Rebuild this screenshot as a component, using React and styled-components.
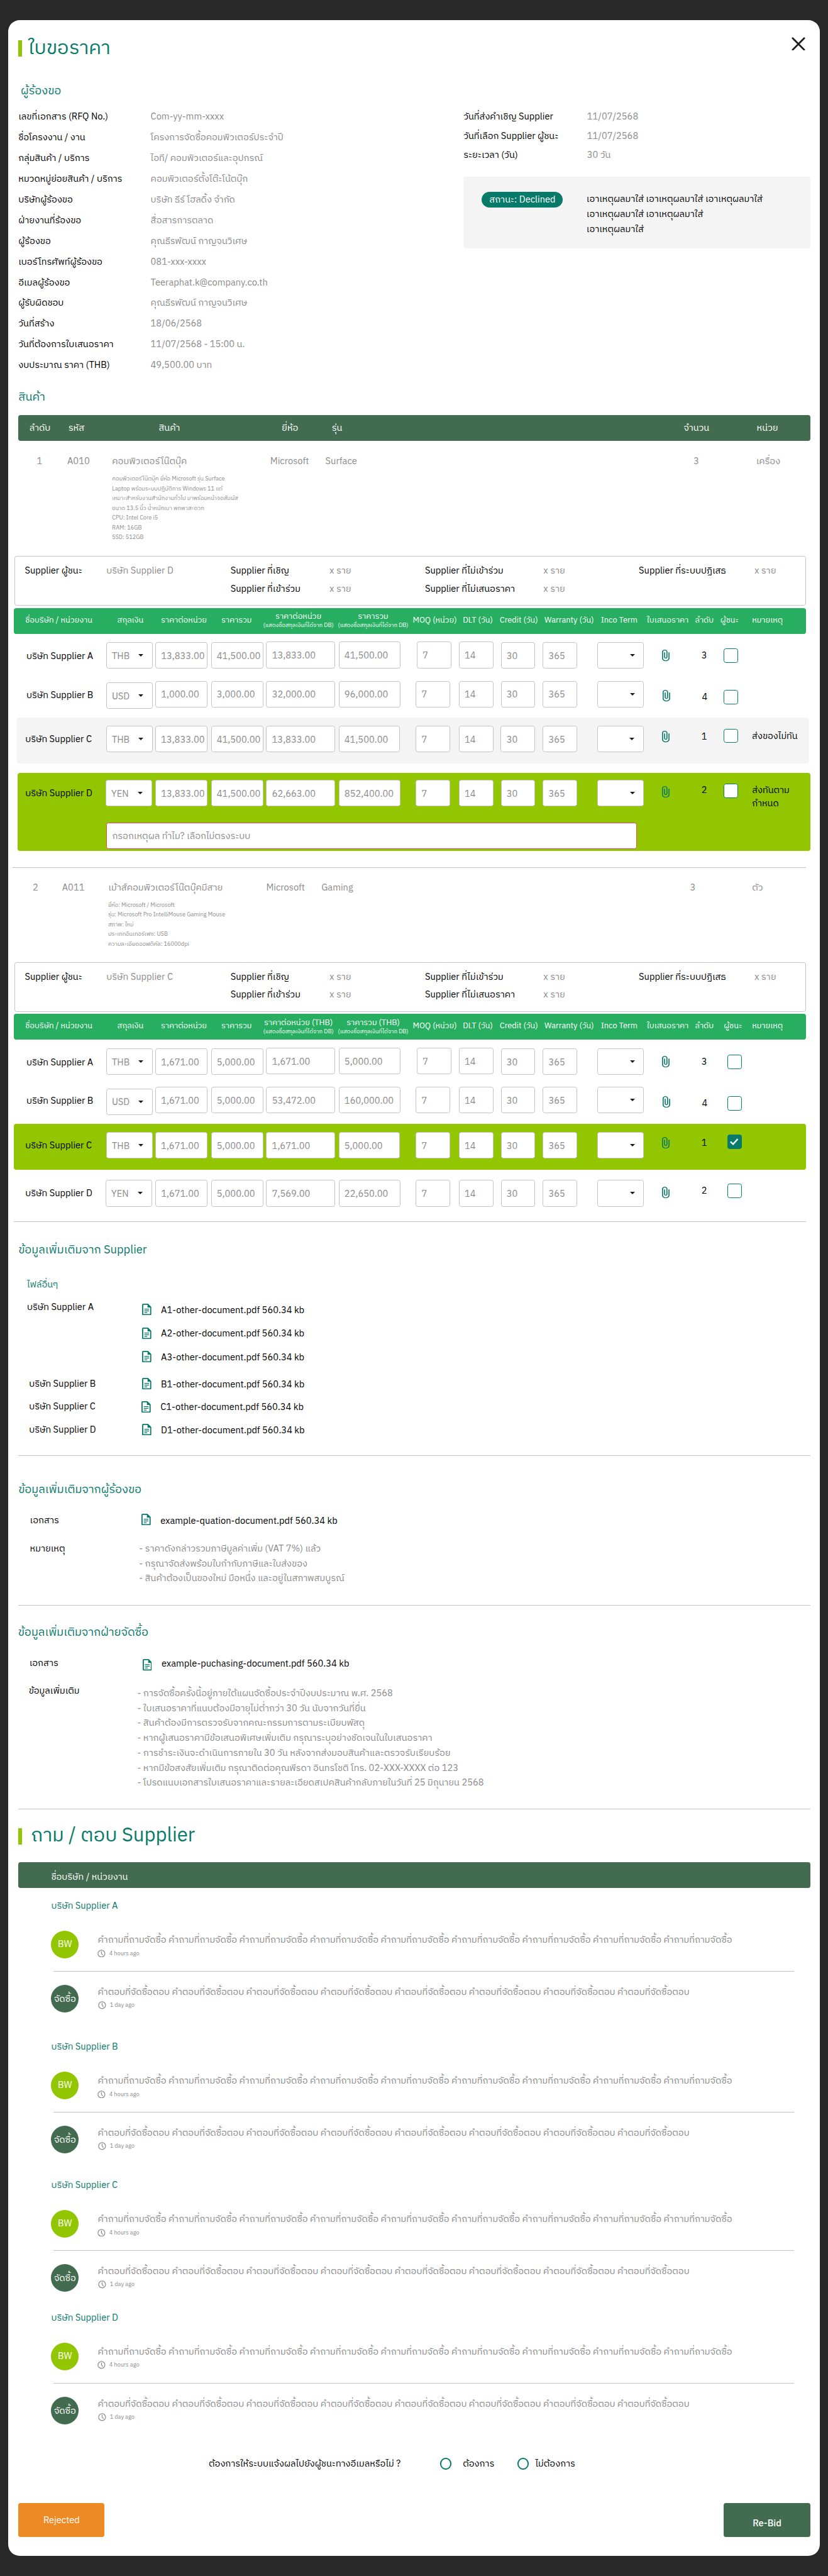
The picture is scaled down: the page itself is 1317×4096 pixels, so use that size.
import React from 'react';
import styled, { createGlobalStyle } from 'styled-components';

const teal = '#077A6A';
const lime = '#91C600';
const forest = '#436B4F';
const green = '#27AE60';
const grey = '#8A8A8A';
const line = '#C4C4C4';

const Global = createGlobalStyle`
  body { margin: 0; background: #282828; }
  * { box-sizing: border-box; }
`;

/* Turns a list of left edges into column widths. */
const grid = xs => xs.slice(1).map((x, i) => `${x - xs[i]}px`).join(' ') + ' max-content';

const Page = styled.div`
  zoom: 0.914583;
  width: 1440px;
  height: 4478px;
  overflow: hidden;
  padding: 35px 14px;
  background: #282828;
  color: #000;
  font-family: "IBM Plex Sans Thai", "Noto Sans", sans-serif;
  font-size: 16px;
`;
const Modal = styled.main`
  height: 4409px;
  border-radius: 20px;
  background: #fff;
  display: flex;
  flex-direction: column;
`;
const TitleRow = styled.header`
  display: flex;
  align-items: center;
  height: 56px;
  flex: none;
  margin-top: ${p => p.$mt}px;
  padding: 0 25px 0 18px;
`;
const Accent = styled.span`
  width: 6px;
  height: 28px;
  background: ${lime};
`;
const Title = styled.h1`
  margin: 0;
  padding: ${p => p.$pt}px 0 0 ${p => p.$gap}px;
  flex: 1;
  font-size: 34px;
  line-height: 48px;
  font-weight: 400;
  color: ${teal};
`;
const CloseIcon = styled.svg`
  width: 24px;
  height: 24px;
  margin-bottom: 16px;
`;
const Heading = styled.h2`
  margin: ${p => p.$mt}px 0 0 ${p => p.$x}px;
  flex: none;
  font-size: 20px;
  line-height: 34px;
  height: 30px;
  font-weight: 400;
  color: ${teal};
  white-space: nowrap;
`;
const SubHeading = styled.h3`
  margin: 33.5px 0 0 33px;
  height: 24px;
  font-size: 16px;
  line-height: 27px;
  font-weight: 400;
  color: ${teal};
`;
const Info = styled.section`
  display: grid;
  grid-template-columns: 774px 603px;
  height: 468px;
  margin-top: 13px;
  padding-left: 18px;
`;
const InfoRow = styled.div`
  display: grid;
  grid-template-columns: ${p => p.$w}px max-content;
  line-height: ${p => p.$h + 3}px;
  height: ${p => p.$h}px;
  white-space: nowrap;
`;
const InfoRight = styled.div`
  padding-top: 1.5px;
`;
const Muted = styled.span`
  color: ${grey};
`;
const ReasonCard = styled.div`
  display: grid;
  grid-template-columns: 182px max-content;
  margin-top: 21.5px;
  height: 125px;
  padding: 27px 0 0 32px;
  border-radius: 4px;
  background: #f4f4f4;
`;
const Pill = styled.span`
  width: 141px;
  height: 27px;
  line-height: 30px;
  border-radius: 14px;
  background: ${teal};
  color: #fff;
  text-align: center;
`;
const ReasonText = styled.div`
  padding-top: 1px;
  line-height: 26px;
  white-space: pre;
`;
const HeaderBar = styled.div`
  display: grid;
  grid-template-columns: ${p => p.$cols};
  flex: none;
  height: 45px;
  line-height: ${p => p.$lh}px;
  margin: 17px 17px 0 18px;
  padding-left: ${p => p.$pl}px;
  border-radius: 4px;
  background: ${forest};
  color: #fff;
  white-space: nowrap;
`;
const ItemRow = styled.div`
  display: grid;
  grid-template-columns: ${p => p.$cols};
  height: 24px;
  flex: none;
  line-height: 27px;
  margin-top: ${p => p.$mt}px;
  padding-left: ${p => p.$pl}px;
  color: ${grey};
  white-space: nowrap;
`;
const Desc = styled.div`
  margin: 10.7px 0 0 ${p => p.$x}px;
  font-size: 10px;
  line-height: 17px;
  color: ${grey};
  white-space: pre;
`;
const Summary = styled.div`
  flex: none;
  height: 86px;
  margin: ${p => p.$mt}px 24px 0 11px;
  padding: 9px 0 0 17px;
  border: 1px solid ${line};
  border-radius: 4px;
`;
const SummaryRow = styled.div`
  display: grid;
  grid-template-columns: 142px 216px 172px 166px 206px 166px 201px max-content;
  height: 31px;
  line-height: 34px;
  white-space: nowrap;
`;
const QuoteHead = styled.div`
  flex: none;
  display: grid;
  grid-template-columns: ${p => p.$cols};
  height: 45px;
  margin: 4px 24px 0 10px;
  padding-left: 20px;
  border-radius: 4px;
  background: ${green};
  color: #fff;
  font-size: 14px;
  line-height: 43px;
  white-space: nowrap;
`;
const TwoLine = styled.div`
  display: flex;
  flex-direction: column;
  align-items: center;
  width: 122px;
  padding-top: 7px;
  font-size: 14px;
  line-height: 18px;
`;
const Tiny = styled.span`
  font-size: 10px;
  line-height: 14px;
`;
const QuoteRow = styled.div`
  flex: none;
  display: grid;
  grid-template-columns: ${p => p.$cols};
  align-items: start;
  height: ${p => p.$h}px;
  margin: ${p => p.$mt || 0}px ${p => p.$mr || 0}px 0 ${p => p.$ml || 0}px;
  padding-left: ${p => p.$pl}px;
  border-radius: 4px;
  background: ${p => p.$bg || 'transparent'};
`;
const Cell = styled.div`
  margin-top: ${p => p.$t + 2.2}px;
  line-height: 24px;
  white-space: pre;
`;
const Field = styled.div`
  display: flex;
  align-items: center;
  justify-content: space-between;
  width: ${p => p.$w}px;
  height: 46px;
  margin-top: ${p => p.$t}px;
  padding: 0 15px 0 9px;
  border: 1px solid ${p => p.$error ? '#E8455F' : line};
  border-radius: 4px;
  background: #fff;
  color: ${grey};
  line-height: 40px;
  white-space: nowrap;
`;
const FieldText = styled.span`
  padding-top: 4px;
`;
const Caret = styled.i`
  margin-left: auto;
  border: 5px solid transparent;
  border-top: 5px solid #1c1c1c;
  border-bottom: 0;
`;
const ClipSvg = styled.svg`
  width: 13px;
  height: 20px;
  margin-top: ${p => p.$t}px;
  fill: ${teal};
`;
const Check = styled.div`
  display: grid;
  place-items: center;
  width: 25px;
  height: 25px;
  margin-top: ${p => p.$t}px;
  border: 1px solid ${teal};
  border-radius: 4px;
  background: ${p => p.$on ? teal : '#fff'};
`;
const ReasonField = styled(Field)`
  grid-column: 2 / -1;
  margin-top: 15px;
  margin-left: 1.5px;
`;
const Rule = styled.hr`
  flex: none;
  height: 1.1px;
  border: 0;
  background: ${line};
  margin: ${p => p.$mt}px ${p => p.$r ?? 17}px 0 ${p => p.$l ?? 18}px;
`;
const Files = styled.div`
  margin-top: 11.5px;
`;
const FileGroup = styled.div`
  display: grid;
  grid-template-columns: ${p => p.$w}px max-content;
  padding-left: ${p => p.$x}px;
  margin-top: ${p => p.$mt || 0}px;
`;
const FileLabel = styled.div`
  height: ${p => p.$h}px;
  line-height: ${p => p.$h + 3}px;
  white-space: nowrap;
`;
const FileLine = styled.div`
  display: flex;
  align-items: center;
  gap: 17px;
  height: ${p => p.$h}px;
  line-height: 20px;
  white-space: nowrap;
`;
const FileName = styled.span`
  padding-top: 4px;
`;
const DocSvg = styled.svg`
  width: 16px;
  height: 20px;
  margin-top: ${p => p.$drop || 0}px;
`;
const Notes = styled.div`
  padding-top: 1.5px;
  margin-bottom: -1.5px;
  line-height: 26px;
  color: ${grey};
  white-space: pre;
`;
const Thread = styled.article`
  flex: none;
  height: 198px;
  margin-top: ${p => p.$mt}px;
  padding-left: 75px;
`;
const ThreadName = styled.div`
  height: 24px;
  line-height: 27px;
  color: ${teal};
`;
const Message = styled.div`
  display: grid;
  grid-template-columns: 81px 1fr;
  height: 48px;
  margin-top: ${p => p.$mt}px;
`;
const Avatar = styled.div`
  width: 48px;
  height: 48px;
  border-radius: 50%;
  background: ${p => p.$bg};
  color: #fff;
  line-height: ${p => p.$lh}px;
  text-align: center;
  white-space: nowrap;
`;
const Body = styled.div`
  padding-top: ${p => p.$pt}px;
  color: ${grey};
  line-height: 24px;
  white-space: nowrap;
`;
const Meta = styled.div`
  display: flex;
  align-items: center;
  gap: 6px;
  padding-left: ${p => p.$x}px;
  height: 19px;
  font-size: 10px;
  line-height: 16px;
`;
const Ago = styled.span`
  padding-top: 2px;
`;
const ThreadRule = styled(Rule)`
  margin: 22px 45px 0 4px;
`;
const Notify = styled.div`
  flex: none;
  display: grid;
  grid-template-columns: 402px 40px 95px 31px max-content;
  height: 24px;
  line-height: 27px;
  margin-top: 56.5px;
  padding-left: 349px;
  white-space: nowrap;
`;
const Radio = styled.span`
  width: 20px;
  height: 20px;
  margin-top: 2px;
  border: 2.4px solid ${teal};
  border-radius: 50%;
`;
const Actions = styled.div`
  display: flex;
  justify-content: space-between;
  margin: 57px 17px 0 18px;
`;
const Button = styled.button`
  width: 150px;
  height: 58px;
  padding: ${p => p.$pt || 0}px 0 0;
  border: 0;
  border-radius: 4px;
  background: ${p => p.$bg};
  color: #fff;
  font: ${p => p.$weight || 400} 16px "IBM Plex Sans Thai", "Noto Sans", sans-serif;
`;

const Clip = ({ t }) => (
  <ClipSvg $t={t} viewBox="7 1 11 22" preserveAspectRatio="none">
    <path d="M16.5 6v11.5c0 2.21-1.79 4-4 4s-4-1.79-4-4V5a2.5 2.5 0 0 1 5 0v10.5c0 .55-.45 1-1 1s-1-.45-1-1V6H10v9.5a2.5 2.5 0 0 0 5 0V5c0-2.21-1.79-4-4-4S7 2.79 7 5v12.5c0 3.04 2.46 5.5 5.5 5.5s5.5-2.46 5.5-5.5V6h-1.5z" />
  </ClipSvg>
);
const Doc = ({ drop }) => (
  <DocSvg $drop={drop} viewBox="0 0 16 20" fill="none" stroke={teal} strokeWidth="2">
    <path d="M10 1H2a1 1 0 0 0-1 1v16a1 1 0 0 0 1 1h12a1 1 0 0 0 1-1V6z" />
    <path d="M9.5 1v5.5H15z" fill={teal} stroke="none" />
    <path d="M4 9.5h8M4 12.5h8M4 15.5h5" strokeWidth="1.5" />
  </DocSvg>
);
const Clock = () => (
  <svg width="14" height="14" viewBox="0 0 14 14" fill="none" stroke={grey} strokeWidth="1.3" strokeLinecap="round">
    <circle cx="7" cy="7" r="6" />
    <path d="M7 3.5V7l2 2.5" />
  </svg>
);

const requester = [
  ['เลขที่เอกสาร (RFQ No.)', 'Com-yy-mm-xxxx'],
  ['ชื่อโครงงาน / งาน', 'โครงการจัดซื้อคอมพิวเตอร์ประจำปี'],
  ['กลุ่มสินค้า / บริการ', 'ไอที/ คอมพิวเตอร์และอุปกรณ์'],
  ['หมวดหมู่ย่อยสินค้า / บริการ', 'คอมพิวเตอร์ตั้งโต๊ะโน้ตบุ๊ก'],
  ['บริษัทผู้ร้องขอ', 'บริษัท ธีร์ โฮลดิ้ง จำกัด'],
  ['ฝ่ายงานที่ร้องขอ', 'สื่อสารการตลาด'],
  ['ผู้ร้องขอ', 'คุณธีรพัฒน์ กาญจนวิเศษ'],
  ['เบอร์โทรศัพท์ผู้ร้องขอ', '081-xxx-xxxx'],
  ['อีเมลผู้ร้องขอ', 'Teeraphat.k@company.co.th'],
  ['ผู้รับผิดชอบ', 'คุณธีรพัฒน์ กาญจนวิเศษ'],
  ['วันที่สร้าง', '18/06/2568'],
  ['วันที่ต้องการใบเสนอราคา', '11/07/2568 - 15:00 น.'],
  ['งบประมาณ ราคา (THB)', '49,500.00 บาท'],
];
const dates = [
  ['วันที่ส่งคำเชิญ Supplier', '11/07/2568'],
  ['วันที่เลือก Supplier ผู้ชนะ', '11/07/2568'],
  ['ระยะเวลา (วัน)', '30 วัน'],
];

function SummaryBox({ mt, winner }) {
  return (
    <Summary $mt={mt}>
      <SummaryRow>
        <span>Supplier ผู้ชนะ</span><Muted>บริษัท Supplier {winner}</Muted>
        <span>Supplier ที่เชิญ</span><Muted>x ราย</Muted>
        <span>Supplier ที่ไม่เข้าร่วม</span><Muted>x ราย</Muted>
        <span>Supplier ที่ระบบปฏิเสธ</span><Muted>x ราย</Muted>
      </SummaryRow>
      <SummaryRow>
        <span /><span />
        <span>Supplier ที่เข้าร่วม</span><Muted>x ราย</Muted>
        <span>Supplier ที่ไม่เสนอราคา</span><Muted>x ราย</Muted>
      </SummaryRow>
    </Summary>
  );
}

function QuoteHeader({ thb, winX }) {
  const cols = grid([44, 204, 280, 385, 458, 588, 718, 805, 869, 947, 1045, 1125, 1209, winX, 1308]);
  const suffix = thb ? ' (THB)' : '';
  return (
    <QuoteHead $cols={cols}>
      <span>ชื่อบริษัท / หน่วยงาน</span><span>สกุลเงิน</span><span>ราคาต่อหน่วย</span><span>ราคารวม</span>
      <TwoLine>{'ราคาต่อหน่วย' + suffix}<Tiny>(แสดงชื่อสกุลเงินที่ได้จาก DB)</Tiny></TwoLine>
      <TwoLine>{'ราคารวม' + suffix}<Tiny>(แสดงชื่อสกุลเงินที่ได้จาก DB)</Tiny></TwoLine>
      <span>MOQ (หน่วย)</span><span>DLT (วัน)</span><span>Credit (วัน)</span><span>Warranty (วัน)</span>
      <span>Inco Term</span><span>ใบเสนอราคา</span><span>ลำดับ</span><span>ผู้ชนะ</span><span>หมายเหตุ</span>
    </QuoteHead>
  );
}

/* Row geometry for each supplier: left edges and top offsets of its cells. */
const shapes = {
  A: { name: 46, sel: 184.5, moq: 725, clip: 1152, rank: 1220, t: { name: 27, sel: 15, unit: 15, conv: 14, rest: 15, clip: 28, rank: 26, check: 26, note: 26 } },
  B: { name: 46, sel: 184.5, moq: 723, clip: 1153, rank: 1221, t: { name: 24, sel: 14.5, unit: 12, conv: 12, rest: 12, clip: 28, rank: 27.5, check: 28, note: 26 } },
  C: { name: 44, sel: 184.5, moq: 723, clip: 1152, rank: 1220, t: { name: 25, sel: 14.3, unit: 14.3, conv: 14.3, rest: 14.3, clip: 23, rank: 20.5, check: 19, note: 19 } },
  D: { name: 44, sel: 183.5, moq: 723, clip: 1152, rank: 1220, t: { name: 22.5, sel: 12, unit: 12, conv: 12, rest: 12, clip: 23, rank: 17.5, check: 18.5, note: 17 } },
};

function Quote({ s, h, cur, vals, rank, winX, on, note, left = 14, right = 1426, bg, mt, reason }) {
  const g = shapes[s];
  const cols = grid([g.name, g.sel, 270, 367, 463, 589, g.moq, 798, 871, 944, 1039, g.clip, g.rank, winX, 1308]);
  return (
    <QuoteRow $cols={cols} $h={h} $bg={bg} $mt={mt} $ml={left - 14} $mr={1426 - right} $pl={g.name - left}>
      <Cell $t={g.t.name}>บริษัท Supplier {s}</Cell>
      <Field $w={81} $t={g.t.sel}><FieldText>{cur}</FieldText><Caret /></Field>
      <Field $w={91} $t={g.t.unit}><FieldText>{vals[0]}</FieldText></Field>
      <Field $w={91} $t={g.t.unit}><FieldText>{vals[1]}</FieldText></Field>
      <Field $w={120} $t={g.t.conv}><FieldText>{vals[2]}</FieldText></Field>
      <Field $w={107} $t={g.t.conv}><FieldText>{vals[3]}</FieldText></Field>
      <Field $w={60} $t={g.t.conv}><FieldText>7</FieldText></Field>
      <Field $w={60} $t={g.t.conv}><FieldText>14</FieldText></Field>
      <Field $w={60} $t={g.t.rest}><FieldText>30</FieldText></Field>
      <Field $w={60} $t={g.t.rest}><FieldText>365</FieldText></Field>
      <Field $w={81} $t={g.t.rest}><Caret /></Field>
      <Clip t={g.t.clip} />
      <Cell $t={g.t.rank}>{rank}</Cell>
      <Check $t={g.t.check} $on={on}>
        {on && <svg width="15" height="12" viewBox="0 0 15 12" fill="none" stroke="#fff" strokeWidth="2.6"><path d="M1 6l4.5 4.2L13.5 1.2" /></svg>}
      </Check>
      <Cell $t={g.t.note}>{note}</Cell>
      {reason && <ReasonField $w={923} $error><FieldText>{reason}</FieldText></ReasonField>}
    </QuoteRow>
  );
}

function Conversation({ name, mt }) {
  return (
    <Thread $mt={mt}>
      <ThreadName>บริษัท Supplier {name}</ThreadName>
      <Message $mt={32}>
        <Avatar $bg={lime} $lh={49}>BW</Avatar>
        <Body $pt={5.7}>
          {Array(9).fill('คำถามที่ถามจัดซื้อ').join(' ')}
          <Meta $x={0}><Clock /><Ago>4 hours ago</Ago></Meta>
        </Body>
      </Message>
      <ThreadRule />
      <Message $mt={23}>
        <Avatar $bg={forest} $lh={51}>จัดซื้อ</Avatar>
        <Body $pt={2.2}>
          {Array(8).fill('คำตอบที่จัดซื้อตอบ').join(' ')}
          <Meta $x={1}><Clock /><Ago>1 day ago</Ago></Meta>
        </Body>
      </Message>
    </Thread>
  );
}

export default function App() {
  return (
    <>
      <Global />
      <Page>
        <Modal>
          <TitleRow $mt={21}>
            <Accent />
            <Title $gap={11} $pt={2}>ใบขอราคา</Title>
            <CloseIcon viewBox="0 0 24 24" stroke="#1c1c1c" strokeWidth="3" strokeLinecap="round">
              <path d="M2 2l20 20M22 2L2 22" />
            </CloseIcon>
          </TitleRow>
          <Heading $mt={30} $x={22}>ผู้ร้องขอ</Heading>
          <Info>
            <div>
              {requester.map(([k, v]) => <InfoRow key={k} $w={230} $h={36}><span>{k}</span><Muted>{v}</Muted></InfoRow>)}
            </div>
            <InfoRight>
              {dates.map(([k, v]) => <InfoRow key={k} $w={215} $h={33}><span>{k}</span><Muted>{v}</Muted></InfoRow>)}
              <ReasonCard>
                <Pill>สถานะ: Declined</Pill>
                <ReasonText>{'เอาเหตุผลมาใส่ เอาเหตุผลมาใส่ เอาเหตุผลมาใส่\nเอาเหตุผลมาใส่ เอาเหตุผลมาใส่\nเอาเหตุผลมาใส่'}</ReasonText>
              </ReasonCard>
            </InfoRight>
          </Info>

          <Heading $mt={22} $x={18}>สินค้า</Heading>
          <HeaderBar $lh={48} $pl={19} $cols={grid([51, 119, 276, 490, 577, 1189, 1316])}>
            <span>ลำดับ</span><span>รหัส</span><span>สินค้า</span><span>ยี่ห้อ</span><span>รุ่น</span><span>จำนวน</span><span>หน่วย</span>
          </HeaderBar>
          <ItemRow $mt={23} $pl={50} $cols={grid([64, 117, 195, 470, 566, 1206, 1315])}>
            <span>1</span><span>A010</span><span>คอมพิวเตอร์โน๊ตบุ๊ค</span><span>Microsoft</span><span>Surface</span><span>3</span><span>เครื่อง</span>
          </ItemRow>
          <Desc $x={181}>{'คอมพิวเตอร์โน๊ตบุ๊ค ยี่ห้อ Microsoft รุ่น Surface\nLaptop พร้อมระบบปฏิบัติการ Windows 11 แท้\nเหมาะสำหรับงานสำนักงานทั่วไป มาพร้อมหน้าจอสัมผัส\nขนาด 13.5 นิ้ว น้ำหนักเบา พกพาสะดวก\nCPU: Intel Core i5\nRAM: 16GB\nSSD: 512GB'}</Desc>
          <SummaryBox mt={23.3} winner="D" />
          <QuoteHeader winX={1253} />
          <Quote s="A" h={70} winX={1259} cur="THB" vals={['13,833.00', '41,500.00', '13,833.00', '41,500.00']} rank="3" />
          <Quote s="B" h={76} winX={1259} cur="USD" vals={['1,000.00', '3,000.00', '32,000.00', '96,000.00']} rank="4" />
          <Quote s="C" h={80} winX={1259} left={29} right={1407} bg="#f4f4f4" cur="THB" vals={['13,833.00', '41,500.00', '13,833.00', '41,500.00']} rank="1" note="ส่งของไม่ทัน" />
          <Quote s="D" h={136} mt={16} winX={1259} left={31} right={1409} bg={lime} cur="YEN" vals={['13,833.00', '41,500.00', '62,663.00', '852,400.00']} rank="2" note={'ส่งทันตาม\nกำหนด'} reason="กรอกเหตุผล ทำไม? เลือกไม่ตรงระบบ" />

          <Rule $mt={28} $l={8} $r={24} />
          <ItemRow $mt={22} $pl={43} $cols={grid([57, 108, 188.5, 463, 559, 1200, 1308])}>
            <span>2</span><span>A011</span><span>เม้าส์คอมพิวเตอร์โน๊ตบุ๊คมีสาย</span><span>Microsoft</span><span>Gaming</span><span>3</span><span>ตัว</span>
          </ItemRow>
          <Desc $x={174}>{'ยี่ห้อ: Microsoft / Microsoft\nรุ่น: Microsoft Pro IntelliMouse Gaming Mouse\nสภาพ: ใหม่\nประเภทอินเทอร์เฟซ: USB\nความละเอียดออฟติคัล: 16000dpi'}</Desc>
          <SummaryBox mt={22.3} winner="C" />
          <QuoteHeader thb winX={1259} />
          <Quote s="A" h={70} winX={1265} cur="THB" vals={['1,671.00', '5,000.00', '1,671.00', '5,000.00']} rank="3" />
          <Quote s="B" h={76} winX={1265} cur="USD" vals={['1,671.00', '5,000.00', '53,472.00', '160,000.00']} rank="4" />
          <Quote s="C" h={80} winX={1265} left={24} right={1402} bg={lime} cur="THB" vals={['1,671.00', '5,000.00', '1,671.00', '5,000.00']} rank="1" on />
          <Quote s="D" h={84} mt={6} winX={1265} cur="YEN" vals={['1,671.00', '5,000.00', '7,569.00', '22,650.00']} rank="2" />
          <Rule $mt={0} $l={10} $r={24} />

          <Heading $mt={32.5} $x={18}>ข้อมูลเพิ่มเติมจาก Supplier</Heading>
          <SubHeading>ไฟล์อื่นๆ</SubHeading>
          <Files>
            <FileGroup $x={33} $w={200}>
              <FileLabel $h={31}>บริษัท Supplier A</FileLabel>
              <div>
                {['A1', 'A2', 'A3'].map(n => <FileLine key={n} $h={41}><Doc /><FileName>{n}-other-document.pdf 560.34 kb</FileName></FileLine>)}
              </div>
            </FileGroup>
            {['B', 'C', 'D'].map((n, i) => (
              <FileGroup key={n} $x={36.5} $w={n === 'C' ? 195.5 : 196.5} $mt={i ? 0 : 6.5}>
                <FileLabel $h={39}>บริษัท Supplier {n}</FileLabel>
                <FileLine $h={40}><Doc /><FileName>{n}1-other-document.pdf 560.34 kb</FileName></FileLine>
              </FileGroup>
            ))}
          </Files>
          <Rule $mt={24.5} />

          <Heading $mt={43} $x={18}>ข้อมูลเพิ่มเติมจากผู้ร้องขอ</Heading>
          <FileGroup $x={38} $w={194} $mt={26.5}>
            <FileLabel $h={24}>เอกสาร</FileLabel>
            <FileLine $h={24}><Doc drop={-2} /><FileName>example-quation-document.pdf 560.34 kb</FileName></FileLine>
          </FileGroup>
          <FileGroup $x={38} $w={190} $mt={24.5}>
            <FileLabel $h={26}>หมายเหตุ</FileLabel>
            <Notes>{'- ราคาดังกล่าวรวมภาษีมูลค่าเพิ่ม (VAT 7%) แล้ว\n- กรุณาจัดส่งพร้อมใบกำกับภาษีและใบส่งของ\n- สินค้าต้องเป็นของใหม่ มือหนึ่ง และอยู่ในสภาพสมบูรณ์'}</Notes>
          </FileGroup>
          <Rule $mt={33} />

          <Heading $mt={30.5} $x={17.5}>ข้อมูลเพิ่มเติมจากฝ่ายจัดซื้อ</Heading>
          <FileGroup $x={37} $w={197} $mt={27}>
            <FileLabel $h={24}>เอกสาร</FileLabel>
            <FileLine $h={24}><Doc drop={8} /><FileName>example-puchasing-document.pdf 560.34 kb</FileName></FileLine>
          </FileGroup>
          <FileGroup $x={36} $w={189} $mt={28}>
            <FileLabel $h={18}>ข้อมูลเพิ่มเติม</FileLabel>
            <Notes>{'- การจัดซื้อครั้งนี้อยู่ภายใต้แผนจัดซื้อประจำปีงบประมาณ พ.ศ. 2568\n- ใบเสนอราคาที่แนบต้องมีอายุไม่ต่ำกว่า 30 วัน นับจากวันที่ยื่น\n- สินค้าต้องมีการตรวจรับจากคณะกรรมการตามระเบียบพัสดุ\n- หากผู้เสนอราคามีข้อเสนอพิเศษเพิ่มเติม กรุณาระบุอย่างชัดเจนในใบเสนอราคา\n- การชำระเงินจะดำเนินการภายใน 30 วัน หลังจากส่งมอบสินค้าและตรวจรับเรียบร้อย\n- หากมีข้อสงสัยเพิ่มเติม กรุณาติดต่อคุณพีรดา อินทรโชติ โทร. 02-XXX-XXXX ต่อ 123\n- โปรดแนบเอกสารใบเสนอราคาและรายละเอียดสเปคสินค้ากลับภายในวันที่ 25 มิถุนายน 2568'}</Notes>
          </FileGroup>
          <Rule $mt={32} />

          <TitleRow $mt={19}>
            <Accent />
            <Title $gap={16} $pt={0}>ถาม / ตอบ Supplier</Title>
          </TitleRow>
          <HeaderBar $lh={53} $pl={57} $cols="max-content">ชื่อบริษัท / หน่วยงาน</HeaderBar>
          <Conversation name="A" mt={18} />
          <Conversation name="B" mt={47} />
          <Conversation name="C" mt={42.5} />
          <Conversation name="D" mt={32.5} />

          <Notify>
            <span>ต้องการให้ระบบแจ้งผลไปยังผู้ชนะทางอีเมลหรือไม่ ?</span>
            <Radio /><span>ต้องการ</span>
            <Radio /><span>ไม่ต้องการ</span>
          </Notify>
          <Actions>
            <Button $bg="#EE8A24" $pt={3}>Rejected</Button>
            <Button $bg={forest} $pt={14} $weight={500}>Re-Bid</Button>
          </Actions>
        </Modal>
      </Page>
    </>
  );
}
